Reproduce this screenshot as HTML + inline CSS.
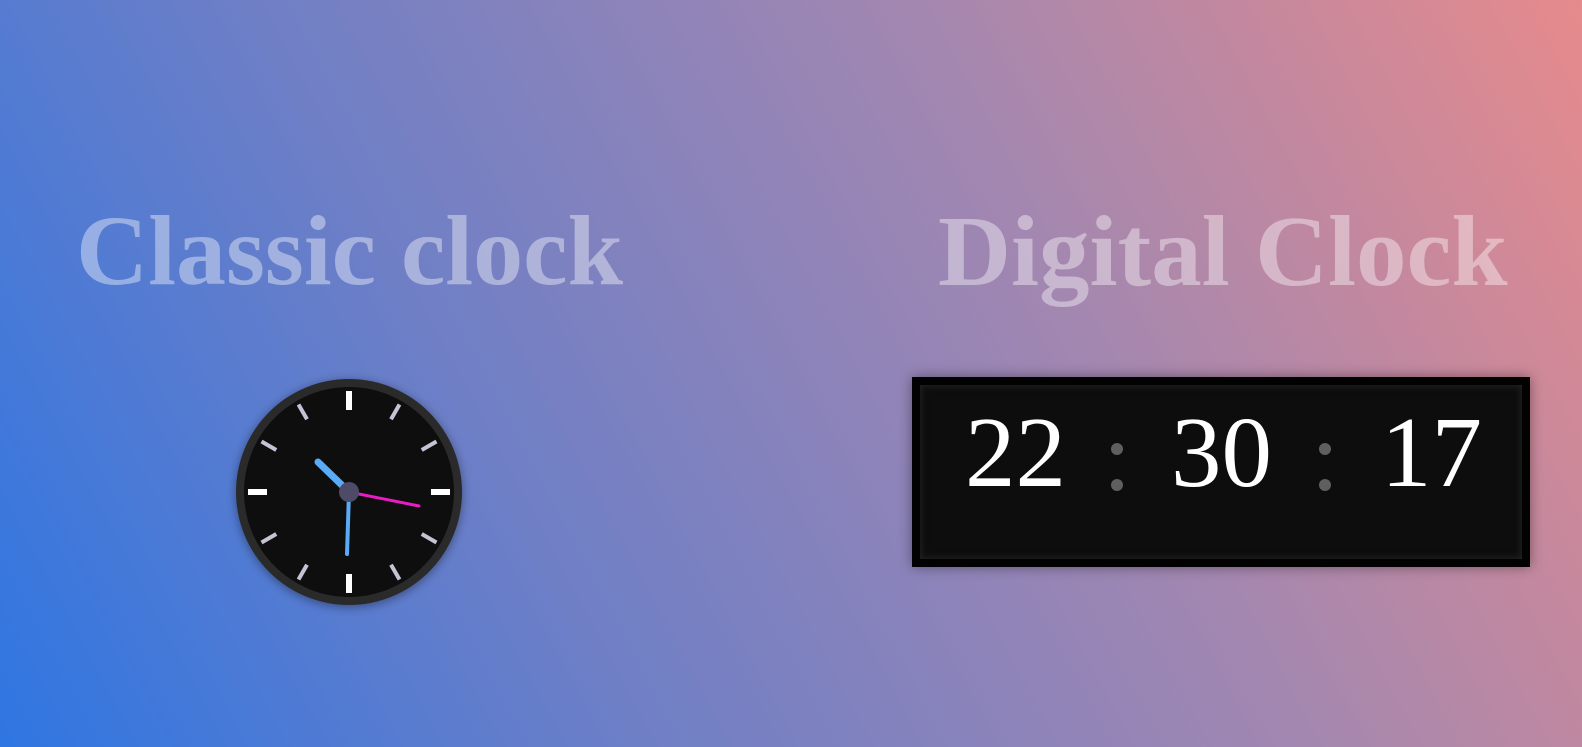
<!DOCTYPE html>
<html><head><style>
html,body{margin:0;padding:0}
body{width:1582px;height:747px;overflow:hidden;position:relative;
background:linear-gradient(62deg,#2f76e2 0%,#6f7fc6 33%,#a387b0 66%,#e68a8c 100%);
font-family:"Liberation Serif",serif;}
.t{position:absolute;top:201px;font-size:100px;font-weight:bold;color:rgba(255,255,255,0.4);white-space:nowrap;line-height:1}
.box{position:absolute;left:912px;top:377px;width:602px;height:174px;border:8px solid #020202;background:#0d0d0d;box-shadow:0 0 12px rgba(0,0,0,0.4), inset 0 0 8px rgba(60,60,60,0.6)}
.d{position:absolute;top:402px;font-size:101px;color:#fff;line-height:1}
.dot{position:absolute;width:12px;height:12px;border-radius:50%;background:#5f5f5f}
</style></head><body>
<div class="t" style="left:76px">Classic clock</div>
<div class="t" style="left:938px;font-size:101px">Digital Clock</div>
<svg style="position:absolute;left:0;top:0" width="1582" height="747">
<defs><filter id="s" x="-30%" y="-30%" width="160%" height="160%"><feDropShadow dx="0" dy="2" stdDeviation="5" flood-opacity="0.4"/></filter></defs>
<circle cx="349" cy="492" r="113" fill="#2a2a2a" filter="url(#s)"/>
<circle cx="349" cy="492" r="105" fill="#0e0e0e"/>
<g transform="translate(349,492)" stroke-linecap="butt">
<g stroke="#fff" stroke-width="6">
<line x1="0" y1="-101" x2="0" y2="-82"/><line x1="0" y1="101" x2="0" y2="82"/>
<line x1="-101" y1="0" x2="-82" y2="0"/><line x1="101" y1="0" x2="82" y2="0"/>
</g>
<g stroke="#c4c4d4" stroke-width="4">
<line transform="rotate(30)" x1="0" y1="-101" x2="0" y2="-84"/>
<line transform="rotate(60)" x1="0" y1="-101" x2="0" y2="-84"/>
<line transform="rotate(120)" x1="0" y1="-101" x2="0" y2="-84"/>
<line transform="rotate(150)" x1="0" y1="-101" x2="0" y2="-84"/>
<line transform="rotate(210)" x1="0" y1="-101" x2="0" y2="-84"/>
<line transform="rotate(240)" x1="0" y1="-101" x2="0" y2="-84"/>
<line transform="rotate(300)" x1="0" y1="-101" x2="0" y2="-84"/>
<line transform="rotate(330)" x1="0" y1="-101" x2="0" y2="-84"/>
</g>
<line x1="0" y1="0" x2="-31" y2="-30" stroke="#5aabf6" stroke-width="7" stroke-linecap="round"/>
<line x1="0" y1="0" x2="-2" y2="62" stroke="#5aabf6" stroke-width="4" stroke-linecap="round"/>
<line x1="0" y1="0" x2="70" y2="14" stroke="#e81cc4" stroke-width="3" stroke-linecap="round"/>
<circle r="10" fill="#4d4b68"/>
</g>
</svg>
<div class="box"></div>
<div class="d" style="left:965px">22</div>
<div class="d" style="left:1171px">30</div>
<div class="d" style="left:1381px">17</div>
<div class="dot" style="left:1111px;top:443px"></div>
<div class="dot" style="left:1111px;top:479px"></div>
<div class="dot" style="left:1319px;top:443px"></div>
<div class="dot" style="left:1319px;top:479px"></div>
</body></html>
